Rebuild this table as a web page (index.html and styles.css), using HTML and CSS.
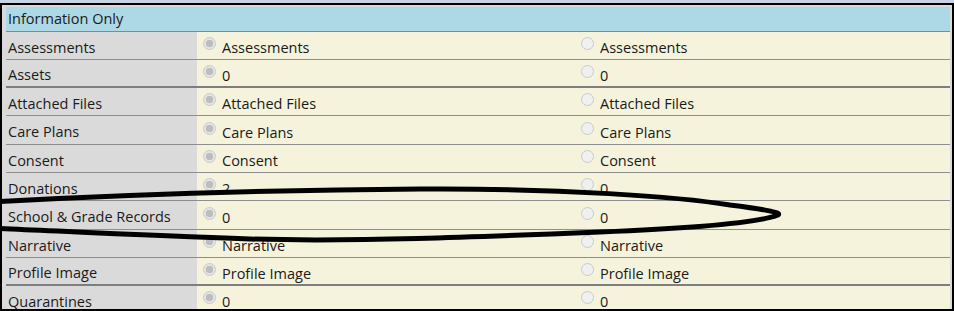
FILE: index.html
```html
<!DOCTYPE html>
<html lang="en">
<head>
  <meta charset="UTF-8">
  <title>Merge Records</title>
  <link rel="stylesheet" href="styles.css">
</head>
<body>
<div class="strip">
  <div class="frame">
    <table class="merge">
      <colgroup>
        <col class="col-label">
        <col class="col-keep">
        <col>
      </colgroup>
      <tr class="section"><td colspan="3">Information Only</td></tr>
      <tr><td class="label">Assessments</td><td><span class="radio on"></span>Assessments</td><td><span class="radio"></span>Assessments</td></tr>
      <tr class="thick"><td class="label">Assets</td><td><span class="radio on"></span>0</td><td><span class="radio"></span>0</td></tr>
      <tr><td class="label">Attached Files</td><td><span class="radio on"></span>Attached Files</td><td><span class="radio"></span>Attached Files</td></tr>
      <tr class="tall"><td class="label">Care Plans</td><td><span class="radio on"></span>Care Plans</td><td><span class="radio"></span>Care Plans</td></tr>
      <tr><td class="label">Consent</td><td><span class="radio on"></span>Consent</td><td><span class="radio"></span>Consent</td></tr>
      <tr><td class="label">Donations</td><td><span class="radio on"></span>2</td><td><span class="radio"></span>0</td></tr>
      <tr class="tall"><td class="label">School &amp; Grade Records</td><td><span class="radio on"></span>0</td><td><span class="radio"></span>0</td></tr>
      <tr><td class="label">Narrative</td><td><span class="radio on"></span>Narrative</td><td><span class="radio"></span>Narrative</td></tr>
      <tr class="thick"><td class="label">Profile Image</td><td><span class="radio on"></span>Profile Image</td><td><span class="radio"></span>Profile Image</td></tr>
      <tr><td class="label">Quarantines</td><td><span class="radio on"></span>0</td><td><span class="radio"></span>0</td></tr>
    </table>
  </div>

  <!-- marker loop drawn over the school records row -->
  <svg class="loop" width="954" height="311" viewBox="0 0 954 311">
    <path d="M-10 202 C 100 196, 250 190, 420 189 C 560 188, 680 197, 730 205 C 770 210, 782 213, 778 215 C 760 222, 700 228, 600 232 C 480 237, 350 242, 250 239 C 150 236, 60 231, -10 228"
          fill="none" stroke="#000" stroke-width="5" stroke-linecap="round"/>
  </svg>
</div>
</body>
</html>
```

FILE: styles.css
```css
body {
  margin: 0;
  font-family: "Open Sans", "Noto Sans", sans-serif;
  font-size: 14.5px;
  color: #1a1a1a;
}

.strip {
  position: relative;
  height: 311px;
  padding-top: 3px;
  box-sizing: border-box;
  background: #c9d3e4;
  overflow: hidden;
}

.frame {
  height: 308px;
  box-sizing: border-box;
  border: 2px solid #000;
  padding: 2px 2px 0 4px;
  background: #dadada;
  overflow: hidden;
}

.merge {
  width: 100%;
  border-collapse: collapse;
  table-layout: fixed;
}

.col-label {
  width: 191px;
}

.col-keep {
  width: 378px;
}

.merge td {
  height: 28px;
  padding: 4px 0 0 6px;
  border-bottom: 1px solid #8e8e8e;
  background: #f5f3dc;
  white-space: nowrap;
  box-sizing: border-box;
}

.merge td.label {
  padding-left: 2px;
  background: #dadada;
}

.merge tr.tall td {
  height: 29px;
}

.merge tr.thick td {
  border-bottom: 2px solid #7e7e7e;
}

.merge tr.section td {
  height: 24px;
  padding: 0 0 0 2px;
  background: #add8e6;
  border-bottom: 1px solid #7c8c92;
}

.radio {
  display: inline-block;
  width: 11px;
  height: 11px;
  margin-right: 6px;
  vertical-align: 3px;
  border: 1px solid #cacaca;
  border-radius: 50%;
  background: #f0f0f0;
  box-sizing: content-box;
}

.radio.on {
  background: radial-gradient(circle, #bdbdbd 0 3.5px, #e4e4e4 4px);
}

.loop {
  position: absolute;
  left: 0;
  top: 0;
}
```
